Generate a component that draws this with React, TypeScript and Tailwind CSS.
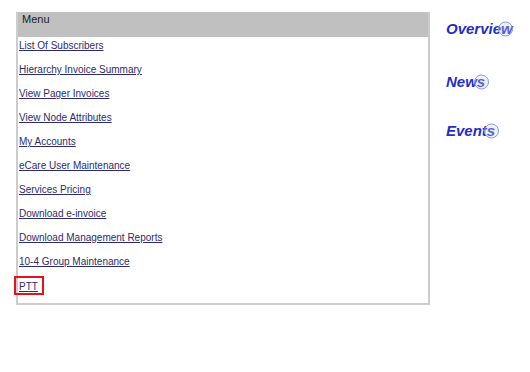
import React from "react";

const links = [
  "List Of Subscribers",
  "Hierarchy Invoice Summary",
  "View Pager Invoices",
  "View Node Attributes",
  "My Accounts",
  "eCare User Maintenance",
  "Services Pricing",
  "Download e-invoice",
  "Download Management Reports",
  "10-4 Group Maintenance",
  "PTT",
];

function Side({ text, last, cls }: { text: string; last: string; cls: string }) {
  return (
    <a className={"relative block text-[15px] font-bold italic text-[#1f2fc4] leading-[16px] " + cls}>
      {text}
      <span className="relative inline-block">
        {last}
        <span className="absolute left-[-3px] top-1/2 -translate-y-1/2 w-[15px] h-[15px] rounded-full border border-[#8c9ad8] bg-[#c8d0f0]/30" />
      </span>
    </a>
  );
}

export default function App() {
  return (
    <div className="w-[530px] h-[372px] bg-white relative" style={{ fontFamily: '"Liberation Sans", Arial, sans-serif' }}>
      <div className="absolute left-[16px] top-[12px] w-[414px] h-[293px] border-l-2 border-r-2 border-b-2 border-[#cccccc] bg-white">
        <div className="h-[25px] bg-[#c0c0c0] pl-[4px] pt-[1px] text-[11px] text-[#222] leading-[13px]">Menu</div>
        <div className="flex flex-col pl-[1px] pt-[3px]">
          {links.map((l) => (
            <div key={l} className="h-[24px] flex items-start">
              {l === "PTT" ? (
                <span className="border-2 border-[#e0141a] pl-[3px] pr-[4px] ml-[-5px] mt-[-4px] pt-[1px] leading-[12px]">
                  <a className="text-[10px] leading-[12px] text-[#2c2c6c] underline">{l}</a>
                </span>
              ) : (
                <a className="text-[10px] leading-[12px] text-[#2c2c6c] underline">{l}</a>
              )}
            </div>
          ))}
        </div>
      </div>
      <div className="absolute left-[446px] top-[21px] flex flex-col">
        <Side text="Overvie" last="w" cls="" />
        <Side text="New" last="s" cls="mt-[37px]" />
        <Side text="Event" last="s" cls="mt-[33px]" />
      </div>
    </div>
  );
}
